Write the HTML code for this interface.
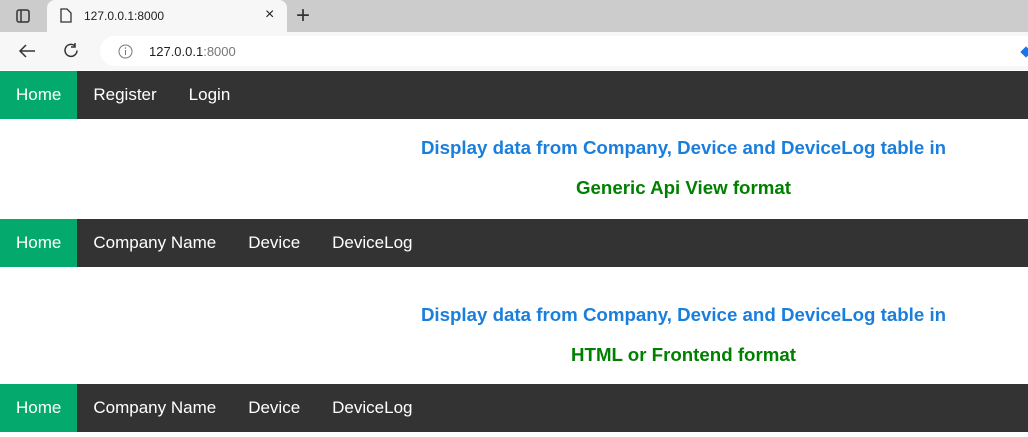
<!DOCTYPE html>
<html><head><style>
*{margin:0;padding:0;box-sizing:border-box}
body{width:1028px;height:437px;overflow:hidden;background:#fff;font-family:"Liberation Sans",Arial,sans-serif;position:relative}
.tabs{position:absolute;top:0;left:0;width:1028px;height:32px;background:#cccccc}
.tab{position:absolute;left:47px;top:0;width:240px;height:32px;background:#f7f7f7;border-radius:8px 8px 0 0;font-size:12px;color:#222}
.tool{position:absolute;top:32px;left:0;width:1028px;height:38px;background:#f7f7f7}
.addr{position:absolute;left:100px;top:4px;width:960px;height:30px;background:#fff;border-radius:15px;font-size:13px}
.nav{position:absolute;left:0;width:1028px;height:48px;background:#333}
.nav a{float:left;color:#fff;font-size:17px;line-height:48px;padding:0 16px;text-decoration:none}
.nav a.act{background:#04AA6D}
.h{position:absolute;left:0;width:1367px;text-align:center;font-weight:bold;font-size:18.7px}
.b{color:#1a7fdc}.g{color:#008000}
</style></head><body>
<div class="tabs">
 <svg style="position:absolute;left:16px;top:9px" width="14" height="14"><rect x="1" y="1" width="12" height="12" rx="2" fill="none" stroke="#333" stroke-width="1.5"/><line x1="5" y1="1" x2="5" y2="13" stroke="#333" stroke-width="1.5"/></svg>
 <div class="tab">
  <svg style="position:absolute;left:13px;top:8px" width="12" height="15"><path d="M1 1h6l4 4v9H1z" fill="none" stroke="#333" stroke-width="1.3"/></svg>
  <span style="position:absolute;left:37px;top:9px">127.0.0.1:8000</span>
  <span style="position:absolute;left:218px;top:6px;font-size:16px">×</span>
 </div>
 <span style="position:absolute;left:296px;top:2px;font-size:24px;color:#333;font-weight:300">+</span>
</div>
<div class="tool">
 <svg style="position:absolute;left:18px;top:11px" width="18" height="16"><path d="M17 8H2M8 2L2 8l6 6" fill="none" stroke="#333" stroke-width="1.5"/></svg>
 <svg style="position:absolute;left:63px;top:10px" width="17" height="17"><path d="M14 8.5A6 6 0 1 1 11.5 3.5M12 1v4h-4" fill="none" stroke="#333" stroke-width="1.5"/></svg>
 <div class="addr">
  <svg style="position:absolute;left:18px;top:8px" width="15" height="15"><circle cx="7.5" cy="7.5" r="6.5" fill="none" stroke="#777" stroke-width="1"/><line x1="7.5" y1="6" x2="7.5" y2="11" stroke="#777"/><circle cx="7.5" cy="4" r=".8" fill="#777"/></svg>
  <span style="position:absolute;left:49px;top:8px;color:#222">127.0.0.1<span style="color:#777">:8000</span></span>
 </div>
 <div style="position:absolute;left:1022px;top:16px;width:8px;height:8px;background:#1a73e8;transform:rotate(45deg)"></div>
</div>
<div class="nav" style="top:71px"><a class="act">Home</a><a>Register</a><a>Login</a></div>
<div class="h b" style="top:137px">Display data from Company, Device and DeviceLog table in</div>
<div class="h g" style="top:177px">Generic Api View format</div>
<div class="nav" style="top:219px"><a class="act">Home</a><a>Company Name</a><a>Device</a><a>DeviceLog</a></div>
<div class="h b" style="top:304px">Display data from Company, Device and DeviceLog table in</div>
<div class="h g" style="top:344px">HTML or Frontend format</div>
<div class="nav" style="top:384px"><a class="act">Home</a><a>Company Name</a><a>Device</a><a>DeviceLog</a></div>
</body></html>
